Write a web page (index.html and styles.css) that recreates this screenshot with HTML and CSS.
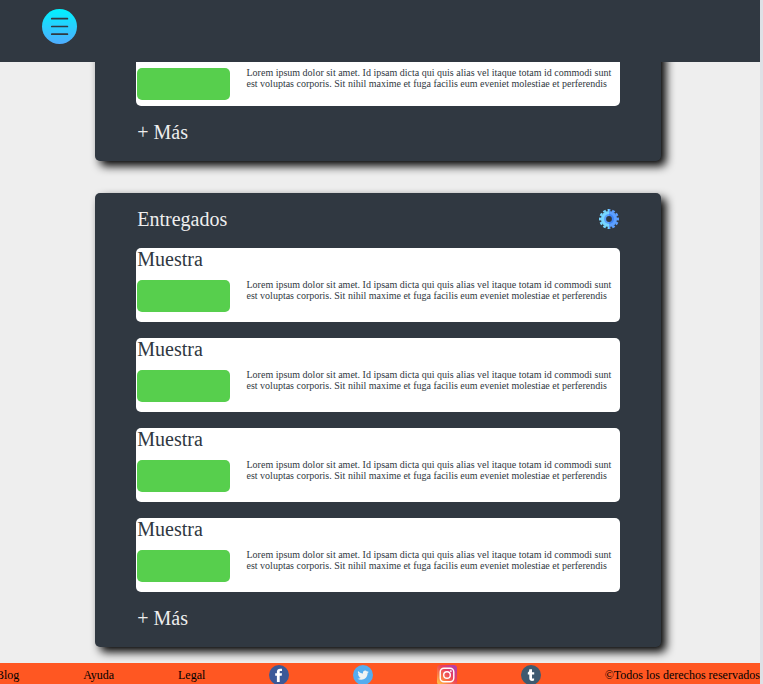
FILE: index.html
```
<!DOCTYPE html>
<html lang="es">
<head>
<meta charset="utf-8">
<title>Entregados</title>
<link rel="stylesheet" href="styles.css">
</head>
<body>
<div class="page">
  <header class="topbar">
    <svg class="menu" viewBox="0 0 36 36">
      <defs><linearGradient id="menuFill" x1="0" y1="0" x2="0" y2="1"><stop offset="0" stop-color="#00f2fe"/><stop offset="1" stop-color="#4facfe"/></linearGradient></defs>
      <circle cx="18.500" cy="18.500" r="17.500" fill="url(#menuFill)"/>
      <path d="M10.800 10.700h15.600M10.800 18.500h15.600M10.800 26.200h15.600" stroke="#303841" stroke-width="1.700" stroke-linecap="round"/>
    </svg>
  </header>
  <main class="boards">
    <section class="board board-clipped">
      <article class="card card-clipped">
        <div class="card-body"><div class="tag"></div><p class="text">Lorem ipsum dolor sit amet. Id ipsam dicta qui quis alias vel itaque totam id commodi sunt est voluptas corporis. Sit nihil maxime et fuga facilis eum eveniet molestiae et perferendis</p></div>
      </article>
      <div class="more">+ Más</div>
    </section>
    <section class="board">
      <div class="board-head">
        <h2 class="heading">Entregados</h2>
        <svg class="gear" viewBox="0 0 20 20">
          <defs><linearGradient id="gearFill" gradientUnits="userSpaceOnUse" x1="0" y1="0" x2="20" y2="0"><stop offset=".5" stop-color="#76d6ff"/><stop offset=".5" stop-color="#5c9fff"/></linearGradient></defs>
          <circle cx="10" cy="10" r="8.900" fill="none" stroke="url(#gearFill)" stroke-width="2.200" pathLength="120" stroke-dasharray="6 4" stroke-dashoffset="3"/>
          <circle cx="10" cy="10" r="8.100" fill="url(#gearFill)"/>
          <circle cx="10" cy="10" r="5" fill="#5aa0fa"/>
          <path d="M10 5a5 5 0 0 1 0 10z" fill="#4086f5"/>
          <circle cx="10" cy="10" r="2.900" fill="#303841"/>
        </svg>
      </div>
      <article class="card">
        <h3 class="title">Muestra</h3>
        <div class="card-body"><div class="tag"></div><p class="text">Lorem ipsum dolor sit amet. Id ipsam dicta qui quis alias vel itaque totam id commodi sunt est voluptas corporis. Sit nihil maxime et fuga facilis eum eveniet molestiae et perferendis</p></div>
      </article>
      <article class="card">
        <h3 class="title">Muestra</h3>
        <div class="card-body"><div class="tag"></div><p class="text">Lorem ipsum dolor sit amet. Id ipsam dicta qui quis alias vel itaque totam id commodi sunt est voluptas corporis. Sit nihil maxime et fuga facilis eum eveniet molestiae et perferendis</p></div>
      </article>
      <article class="card">
        <h3 class="title">Muestra</h3>
        <div class="card-body"><div class="tag"></div><p class="text">Lorem ipsum dolor sit amet. Id ipsam dicta qui quis alias vel itaque totam id commodi sunt est voluptas corporis. Sit nihil maxime et fuga facilis eum eveniet molestiae et perferendis</p></div>
      </article>
      <article class="card">
        <h3 class="title">Muestra</h3>
        <div class="card-body"><div class="tag"></div><p class="text">Lorem ipsum dolor sit amet. Id ipsam dicta qui quis alias vel itaque totam id commodi sunt est voluptas corporis. Sit nihil maxime et fuga facilis eum eveniet molestiae et perferendis</p></div>
      </article>
      <div class="more">+ Más</div>
    </section>
  </main>
  <footer class="footer">
    <span>Blog</span>
    <span>Ayuda</span>
    <span>Legal</span>
    <svg class="social" viewBox="0 0 20 20"><circle cx="10" cy="10" r="10" fill="#3b5998"/><path d="M7.900 17v-6.200H6.200V8.200h1.700V6.700c0-2.100 1.300-3 3.200-3h1.900v2.400h-1.300c-.8 0-1 .4-1 1v1.100H13l-.3 2.600h-2v6.200z" fill="#fff"/></svg>
    <svg class="social" viewBox="0 0 20 20"><circle cx="10" cy="10" r="10" fill="#55acee"/><path d="M15.800 6.700c-.4.200-.8.300-1.300.4.500-.3.800-.7 1-1.300-.4.300-.9.500-1.500.6a2.300 2.300 0 0 0-4 2.100c-2-.1-3.700-1-4.800-2.400-.6 1.100-.3 2.400.7 3.100-.4 0-.7-.1-1-.3 0 1.100.8 2 1.800 2.300h-1c.3.900 1.100 1.500 2.100 1.600-1 .8-2.100 1.100-3.400 1 4.700 2.700 10.200-.1 10.200-5.700.5-.4.900-.8 1.200-1.400z" fill="#f1f2f2"/></svg>
    <svg class="social" viewBox="0 0 20 20">
      <defs><linearGradient id="instaFill" x1="0" y1="1" x2="1" y2="0"><stop offset="0" stop-color="#ffd34e"/><stop offset=".3" stop-color="#fb7b43"/><stop offset=".6" stop-color="#e8405f"/><stop offset="1" stop-color="#a43bc4"/></linearGradient></defs>
      <rect width="20" height="20" rx="3.500" fill="url(#instaFill)"/><rect x="3.200" y="3.200" width="13.600" height="13.600" rx="3.700" fill="none" stroke="#fff" stroke-width="1.400"/><circle cx="10" cy="10" r="3.300" fill="none" stroke="#fff" stroke-width="1.400"/><circle cx="13.900" cy="6.100" r=".9" fill="#fff"/>
    </svg>
    <svg class="social" viewBox="0 0 20 20"><circle cx="10" cy="10" r="10" fill="#3e5a70"/><path d="M8.300 4.300H11v3h2.200v2.200H11v3c0 1.300.9 1.400 2.100.8v2.300c-2.400 1-4.800.3-4.800-2.300V9.500H6.800V7.500c1-.3 1.400-1.200 1.500-3.200z" fill="#fff"/></svg>
    <span>©Todos los derechos reservados</span>
  </footer>
</div>
</body>
</html>
```
FILE: styles.css
```
* { box-sizing: border-box; }
body {
  margin: 0;
  height: 684px;
  overflow: hidden;
  background: #dee1e6;
  font-family: "Liberation Serif", serif;
}
.page {
  width: 760px;
  height: 684px;
  display: flex;
  flex-direction: column;
  overflow: hidden;
  background: #eee;
}
.topbar {
  height: 62px;
  flex: none;
  padding: 8px 0 0 41px;
  background: #303841;
  z-index: 1;
}
.menu { display: block; width: 36px; height: 36px; overflow: visible; }
.boards {
  height: 601px;
  flex: none;
  display: flex;
  flex-direction: column;
  align-items: flex-start;
  gap: 32px;
  padding-left: 95px;
}
.board {
  width: 566px;
  height: 454px;
  flex: none;
  display: flex;
  flex-direction: column;
  gap: 16px;
  padding: 15px 41px 0;
  border-radius: 5px;
  background: #303841;
  box-shadow: 5px 5px 10px #000;
}
/* The first board continues underneath the fixed-height top bar. */
.board-clipped {
  height: 139px;
  margin-top: -40px;
  padding-top: 40px;
}
.board-head {
  height: 24px;
  display: flex;
  justify-content: space-between;
  padding: 0 1px 0 1.25px;
}
.heading, .title, .more {
  margin: 0;
  font-size: 20px;
  font-weight: 400;
  line-height: 23px;
}
.heading, .more { color: #eee; }
.more { padding-left: 1.25px; margin-top: -1px; }
.gear { width: 20px; height: 20px; margin-top: 1px; }
.card {
  height: 74px;
  flex: none;
  padding: 0 1px;
  border-radius: 5px;
  background: #fff;
  color: #303841;
}
.title { margin-bottom: 9px; padding-left: .25px; }
.card-clipped {
  height: 44px;
  padding-top: 6px;
  border-radius: 0 0 5px 5px;
}
.card-body { display: flex; gap: 16.5px; }
.tag {
  width: 93px;
  height: 32px;
  flex: none;
  border-radius: 5px;
  background: #57cf4d;
}
.text {
  margin: -1px 0 0;
  font-size: 10px;
  line-height: 11px;
}
.footer {
  height: 21px;
  flex: none;
  display: flex;
  align-items: center;
  justify-content: space-between;
  margin-left: -4px;
  padding-top: 3px;
  background: #ff5722;
  color: #000;
  font-size: 12px;
  white-space: nowrap;
  z-index: 1;
}
.social { width: 20px; height: 20px; flex: none; }
```
